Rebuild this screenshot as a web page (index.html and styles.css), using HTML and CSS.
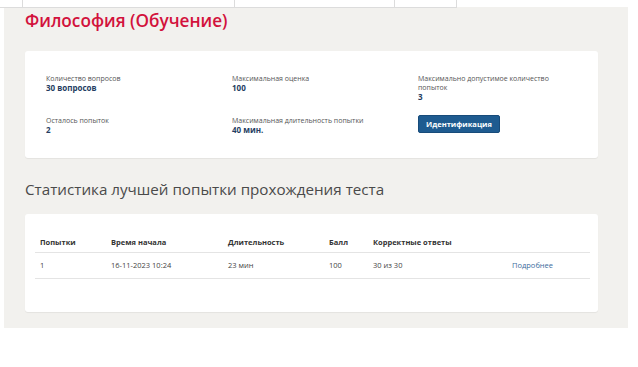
FILE: index.html
```html
<!DOCTYPE html>
<html lang="ru">
<head>
<meta charset="utf-8">
<title>Философия (Обучение)</title>
<link rel="stylesheet" href="styles.css">
</head>
<body>
<div class="topbar">
  <div class="tcell t1"></div>
  <div class="tcell t2"></div>
  <div class="tcell t3"></div>
  <div class="tcell t4"></div>
</div>
<main class="panel">
  <h1 class="title">Философия (Обучение)</h1>
  <section class="card info">
    <div class="item">
      <div class="label">Количество вопросов</div>
      <div class="value">30 вопросов</div>
    </div>
    <div class="item">
      <div class="label">Максимальная оценка</div>
      <div class="value">100</div>
    </div>
    <div class="item">
      <div class="label wrap">Максимально допустимое количество попыток</div>
      <div class="value">3</div>
    </div>
    <div class="item">
      <div class="label">Осталось попыток</div>
      <div class="value">2</div>
    </div>
    <div class="item">
      <div class="label">Максимальная длительность попытки</div>
      <div class="value">40 мин.</div>
    </div>
    <div class="item">
      <button class="btn" type="button">Идентификация</button>
    </div>
  </section>
  <h2 class="subtitle">Статистика лучшей попытки прохождения теста</h2>
  <section class="card stats">
    <table class="tbl">
      <colgroup>
        <col class="c1"><col class="c2"><col class="c3"><col class="c4"><col class="c5"><col class="c6">
      </colgroup>
      <thead>
        <tr><th>Попытки</th><th>Время начала</th><th>Длительность</th><th>Балл</th><th>Корректные ответы</th><th></th></tr>
      </thead>
      <tbody>
        <tr><td>1</td><td>16-11-2023 10:24</td><td>23 мин</td><td>100</td><td>30 из 30</td><td><a class="more" href="#">Подробнее</a></td></tr>
      </tbody>
    </table>
  </section>
</main>
</body>
</html>
```

FILE: styles.css
```css
html, body {
  margin: 0;
  padding: 0;
  background: #ffffff;
  font-family: "Open Sans", "Noto Sans", sans-serif;
}

.topbar {
  display: flex;
  height: 7px;
}
.tcell {
  height: 7px;
  border-right: 1px solid #dcdcdc;
  border-bottom: 1px solid #dcdcdc;
}
.t1 { width: 22px; }
.t2 { width: 211px; }
.t3 { width: 159px; }
.t4 { width: 61px; }

.panel {
  margin-left: 4px;
  width: 603px;
  padding: 0 0 16px 21px;
  background: #f2f1ee;
  display: flow-root;
}

.title {
  margin: 3px 0 19px;
  font-size: 17.2px;
  line-height: 22px;
  font-weight: 600;
  color: #d2123c;
}

.card {
  width: 573px;
  background: #ffffff;
  border-radius: 3px;
  box-shadow: 0 1px 1px rgba(0, 0, 0, 0.06);
  box-sizing: border-box;
}

.info {
  display: grid;
  grid-template-columns: 186px 186px 1fr;
  row-gap: 14px;
  padding: 23px 9px 23px 21px;
}
.item {
  font-size: 0;
  line-height: 0;
}
.label {
  font-size: 7px;
  line-height: 9px;
  color: #555555;
}
.label.wrap { max-width: 150px; }
.value {
  font-size: 8px;
  line-height: 10px;
  font-weight: 700;
  color: #253d62;
}
.btn {
  display: block;
  margin-top: -1px;
  height: 18px;
  width: 82px;
  padding: 0;
  background: #1e5b90;
  border: 1px solid #174b7a;
  border-radius: 2px;
  color: #ffffff;
  font-family: "Open Sans", "Noto Sans", sans-serif;
  font-size: 7.5px;
  line-height: 16px;
  font-weight: 700;
}

.subtitle {
  margin: 21px 0 15px;
  font-size: 15.2px;
  line-height: 20px;
  font-weight: 400;
  color: #4a4a4a;
}

.stats {
  padding: 18px 8px 33px 10px;
}
.tbl {
  width: 555px;
  border-collapse: collapse;
  table-layout: fixed;
}
.c1 { width: 71px; }
.c2 { width: 117px; }
.c3 { width: 101px; }
.c4 { width: 44px; }
.c5 { width: 139px; }
.c6 { width: 83px; }
.tbl th {
  text-align: left;
  font-size: 7.5px;
  line-height: 10px;
  font-weight: 700;
  color: #333333;
  padding: 5px 0 5px 5px;
  border-bottom: 1px solid #e4e4e4;
}
.tbl td {
  font-size: 7.5px;
  line-height: 10px;
  color: #444444;
  padding: 7px 0 8px 5px;
  border-bottom: 1px solid #e4e4e4;
  white-space: nowrap;
}
.more {
  color: #3d6c9c;
  text-decoration: none;
}
```
